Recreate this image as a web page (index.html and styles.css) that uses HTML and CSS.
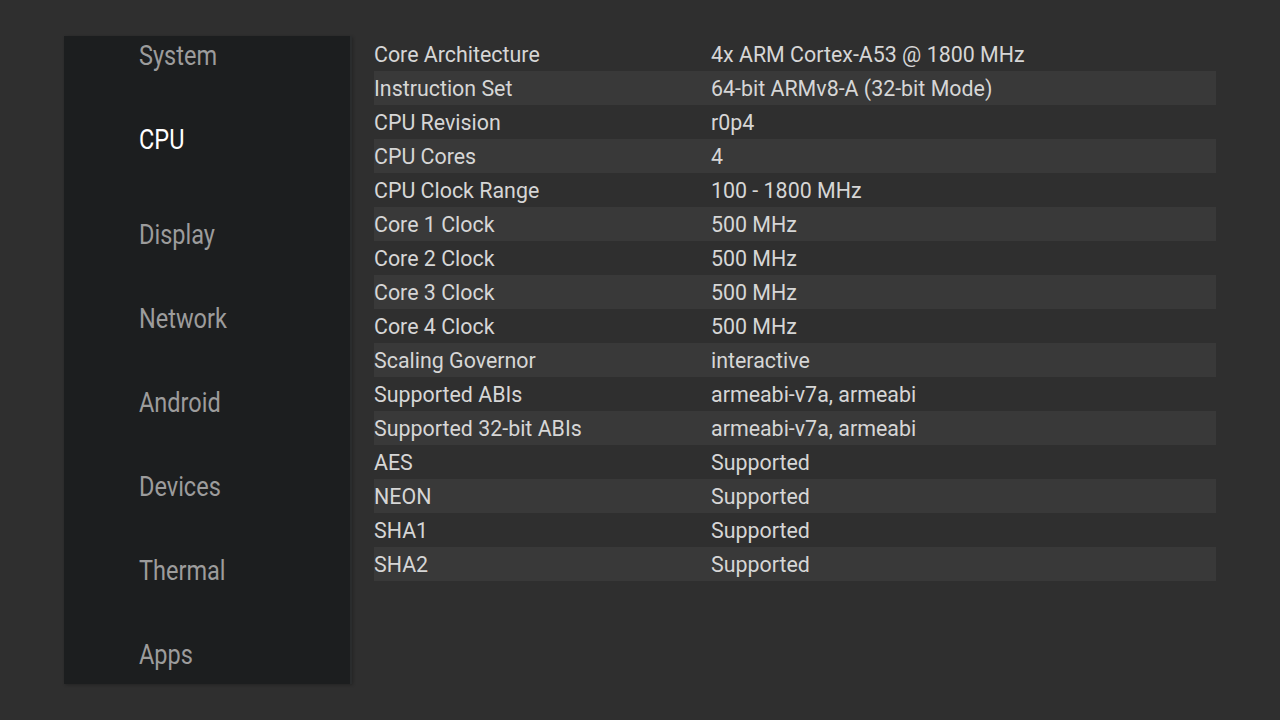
FILE: index.html
```html
<!DOCTYPE html>
<html>
<head>
<meta charset="utf-8">
<link rel="stylesheet" href="styles.css">
</head>
<body>
<div class="screen">
  <nav class="sidebar">
    <div class="nav-item first"><span>System</span></div>
    <div class="nav-item active"><span>CPU</span></div>
    <div class="nav-item"><span>Display</span></div>
    <div class="nav-item"><span>Network</span></div>
    <div class="nav-item"><span>Android</span></div>
    <div class="nav-item"><span>Devices</span></div>
    <div class="nav-item"><span>Thermal</span></div>
    <div class="nav-item"><span>Apps</span></div>
  </nav>
  <main class="content">
    <div class="row"><div class="key">Core Architecture</div><div class="val">4x ARM Cortex-A53 @ 1800 MHz</div></div>
    <div class="row"><div class="key">Instruction Set</div><div class="val">64-bit ARMv8-A (32-bit Mode)</div></div>
    <div class="row"><div class="key">CPU Revision</div><div class="val">r0p4</div></div>
    <div class="row"><div class="key">CPU Cores</div><div class="val">4</div></div>
    <div class="row"><div class="key">CPU Clock Range</div><div class="val">100 - 1800 MHz</div></div>
    <div class="row"><div class="key">Core 1 Clock</div><div class="val">500 MHz</div></div>
    <div class="row"><div class="key">Core 2 Clock</div><div class="val">500 MHz</div></div>
    <div class="row"><div class="key">Core 3 Clock</div><div class="val">500 MHz</div></div>
    <div class="row"><div class="key">Core 4 Clock</div><div class="val">500 MHz</div></div>
    <div class="row"><div class="key">Scaling Governor</div><div class="val">interactive</div></div>
    <div class="row"><div class="key">Supported ABIs</div><div class="val">armeabi-v7a, armeabi</div></div>
    <div class="row"><div class="key">Supported 32-bit ABIs</div><div class="val">armeabi-v7a, armeabi</div></div>
    <div class="row"><div class="key">AES</div><div class="val">Supported</div></div>
    <div class="row"><div class="key">NEON</div><div class="val">Supported</div></div>
    <div class="row"><div class="key">SHA1</div><div class="val">Supported</div></div>
    <div class="row"><div class="key">SHA2</div><div class="val">Supported</div></div>
  </main>
</div>
</body>
</html>
```
FILE: styles.css
```css
html, body {
  margin: 0;
  padding: 0;
  background: #2f2f2f;
  width: 1280px;
  height: 720px;
  overflow: hidden;
  font-family: Roboto, "Noto Sans", sans-serif;
}
.screen {
  display: flex;
  padding: 36px 64px 0 64px;
  height: 720px;
  box-sizing: border-box;
}
.sidebar {
  width: 286px;
  height: 648px;
  background: #1c1e1f;
  border-right: 2px solid #2a2c2d;
  box-shadow: 1px 1px 3px rgba(0,0,0,0.25);
  overflow: hidden;
  flex-shrink: 0;
  display: flex;
  flex-direction: column;
}
.nav-item {
  height: 84px;
  flex-shrink: 0;
  display: flex;
  align-items: center;
  padding-left: 75px;
  font-size: 28px;
  color: #9c9c9c;
}
.nav-item span {
  display: inline-block;
  transform: scaleX(0.84);
  transform-origin: left center;
  white-space: nowrap;
}
.nav-item.first {
  margin-top: -23px;
}
.nav-item.active {
  color: #ffffff;
  margin-bottom: 11px;
}
.content {
  margin-left: 22px;
  padding-top: 1px;
  width: 842px;
}
.row {
  display: flex;
  height: 34px;
  align-items: center;
  font-size: 21.4px;
  color: #d6d6d6;
}
.row:nth-child(even) {
  background: #393939;
}
.key {
  width: 337px;
  flex-shrink: 0;
}
.val {
  flex: 1;
}
```
